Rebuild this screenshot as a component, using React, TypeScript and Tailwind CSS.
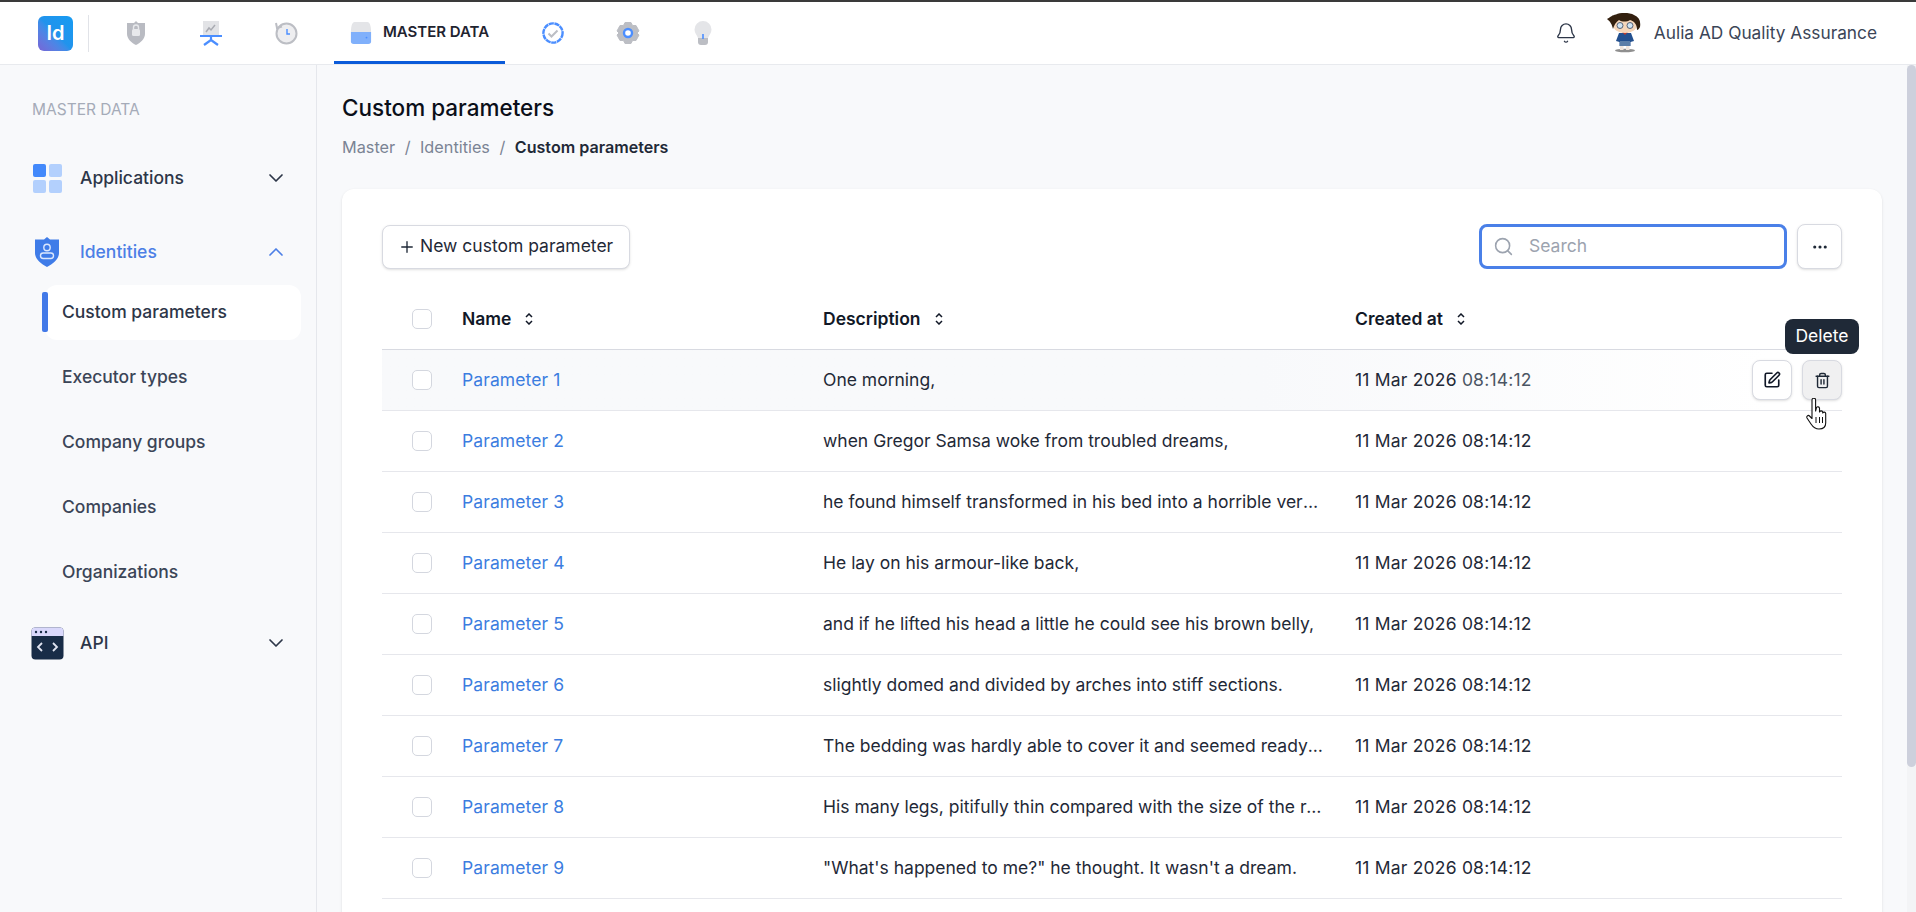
import { Bell, ChevronDown, ChevronUp, Ellipsis, Plus, Search, SquarePen, Trash2 } from "lucide-react";

const rows = [
	"One morning,",
	"when Gregor Samsa woke from troubled dreams,",
	"he found himself transformed in his bed into a horrible vermin.",
	"He lay on his armour-like back,",
	"and if he lifted his head a little he could see his brown belly,",
	"slightly domed and divided by arches into stiff sections.",
	"The bedding was hardly able to cover it and seemed ready to slide off any moment.",
	"His many legs, pitifully thin compared with the size of the rest of him,",
	"\"What's happened to me?\" he thought. It wasn't a dream.",
];

const subItems = ["Executor types", "Company groups", "Companies", "Organizations"];

function ShieldIcon() {
	return (
		<svg width="22" height="26" viewBox="0 0 22 26">
			<path d="M11 1 L13 3 H20 V14 C20 19 15 23 11 25 C7 23 2 19 2 14 V3 H9 Z" fill="#b9bbc2" />
			<rect x="7" y="9" width="8" height="7" rx="1.5" fill="#e8e9ec" />
			<path d="M8.5 9 V7.5 a2.5 2.5 0 0 1 5 0 V9" fill="none" stroke="#e8e9ec" strokeWidth="1.4" />
		</svg>
	);
}

function BoardIcon() {
	return (
		<svg width="24" height="26" viewBox="0 0 24 26">
			<rect x="4" y="1" width="16" height="14" fill="#e2e3e6" />
			<path d="M7 12 L10 8 L12 10 L16 5" fill="none" stroke="#a9abb2" strokeWidth="1.5" />
			<rect x="1" y="15" width="22" height="2" fill="#4b8eff" />
			<path d="M12 16 V21 M12 20 L5 25 M12 20 L19 25" stroke="#4b8eff" strokeWidth="2.2" fill="none" />
		</svg>
	);
}

function HistoryIcon() {
	return (
		<svg width="24" height="26" viewBox="0 0 24 26">
			<circle cx="12.5" cy="13.5" r="10" fill="#eeeef0" stroke="#bcbec4" strokeWidth="2" />
			<path d="M2 3 L3 8 L8 6.5" fill="none" stroke="#bcbec4" strokeWidth="2" />
			<path d="M13 9 V14 H16" fill="none" stroke="#4b8eff" strokeWidth="1.4" />
		</svg>
	);
}

function DriveIcon() {
	return (
		<svg width="22" height="26" viewBox="0 0 24 26">
			<path d="M5 1 H19 C21 1 23 4 23 12 H1 C1 4 3 1 5 1 Z" fill="#e4e5e8" />
			<path d="M1 12 H23 V22 a3 3 0 0 1 -3 3 H4 a3 3 0 0 1 -3 -3 Z" fill="#80b0fb" />
			<circle cx="18" cy="18" r="1" fill="#4b8eff" />
		</svg>
	);
}

function BadgeIcon() {
	return (
		<svg width="24" height="24" viewBox="0 0 24 24">
			<circle cx="12" cy="12" r="9.6" fill="#fff" stroke="#4b8eff" strokeWidth="2.4" strokeDasharray="5.2 0.6" />
			<path d="M7.5 12.5 L10.5 15.5 L16.5 9.5" fill="none" stroke="#bcbec4" strokeWidth="2" />
		</svg>
	);
}

function GearIcon() {
	return (
		<svg width="24" height="24" viewBox="0 0 24 24">
			<path
				d="M9 1.5 H15 L16.5 4.5 L20 4.5 L23 10 L21 12 L23 14 L20 19.5 L16.5 19.5 L15 22.5 H9 L7.5 19.5 L4 19.5 L1 14 L3 12 L1 10 L4 4.5 L7.5 4.5 Z"
				fill="#bcbec4"
				stroke="#bcbec4"
				strokeLinejoin="round"
			/>
			<circle cx="12" cy="12" r="4" fill="#fff" stroke="#4b8eff" strokeWidth="2.4" />
		</svg>
	);
}

function BulbIcon() {
	return (
		<svg width="20" height="26" viewBox="0 0 20 26">
			<path d="M10 1 a8.5 8.5 0 0 1 8.5 8.5 C18.5 13 16 15 15 18 H5 C4 15 1.5 13 1.5 9.5 A8.5 8.5 0 0 1 10 1 Z" fill="#e4e5e8" />
			<path d="M5 18 H15 V22 a3 3 0 0 1 -3 3 H8 a3 3 0 0 1 -3 -3 Z" fill="#bcbec4" />
			<rect x="9.2" y="14" width="1.6" height="5" fill="#4b8eff" />
		</svg>
	);
}

function Avatar() {
	return (
		<svg width="36" height="40" viewBox="0 0 36 40">
			<ellipse cx="19" cy="37.500" rx="10" ry="1.800" fill="#8f8f8f" />
			<rect x="14" y="31" width="3.500" height="6" fill="#f2e6dc" />
			<rect x="20" y="31" width="3.500" height="6" fill="#f2e6dc" />
			<path d="M13 20 H25 L28 28 L24.500 29 V33 H13.500 V29 L10 28 Z" fill="#23508f" />
			<path d="M14 28 H24 V33 H14 Z" fill="#5d7fa8" />
			<path d="M16 19 H22 L19 22 Z" fill="#c0392b" />
			<ellipse cx="19" cy="12" rx="12" ry="8" fill="#f5d6ba" />
			<path d="M1 6 C5 4 6 2 10 1.500 C14 -.5 24 -.5 28 2 C33 4 35 8 34 14 C33 16 32 17 31 17 C31 11 28 8 24 7 C21 9 16 9 13 7 C10 9 8 12 7 16 C6 12 5 9 1 6 Z" fill="#33200f" />
			<circle cx="14" cy="12.500" r="3" fill="#cfe3f2" stroke="#33415c" strokeWidth="0.800" />
			<circle cx="24" cy="12.500" r="3" fill="#cfe3f2" stroke="#33415c" strokeWidth="0.800" />
		</svg>
	);
}

function SortIcon() {
	return (
		<svg width="8" height="12" viewBox="0 0 8 12" className="ml-3.5 text-[#111827]">
			<path d="M1 4 L4 1 L7 4 M1 8 L4 11 L7 8" fill="none" stroke="currentColor" strokeWidth="1.5" />
		</svg>
	);
}

function HandCursor() {
	return (
		<svg width="24" height="32" viewBox="0 0 24 32" className="absolute left-[1806px] top-[398px]">
			<path
				d="M6 2 a1.8 1.8 0 0 1 3.6 0 V13 L10.5 9.5 a1.7 1.7 0 0 1 3 .6 V14 a1.7 1.7 0 0 1 3.2 0 V15 a1.6 1.6 0 0 1 3 .4 V25 C19.7 29 17 31 13 31 C9 31 7 29 5 26 L1 20 C.2 18.500 2 16.500 3.500 18 L6 20.500 Z"
				fill="#fff"
				stroke="#111"
				strokeWidth="1.1"
				strokeLinejoin="round"
			/>
			<path d="M10 19 V25 M13.500 19 V25 M16.500 19 V25" stroke="#111" strokeWidth="1" />
		</svg>
	);
}

function SideHead({ label, icon, open }: { label: string; icon: React.ReactNode; open?: boolean }) {
	return (
		<div className="flex h-[30px] items-center pl-[32px] pr-[28px]">
			<div className="flex w-[48px] shrink-0 items-center">{icon}</div>
			<span className={`flex-1 text-[17.5px] font-[450] ${open ? "text-[#4c7fe6]" : "text-[#2d3648]"}`}>{label}</span>
			{open ? (
				<ChevronUp size={24} strokeWidth={1.7} className="text-[#4c7fe6]" />
			) : (
				<ChevronDown size={24} strokeWidth={1.7} className="text-[#2d3648]" />
			)}
		</div>
	);
}

function Sidebar() {
	return (
		<aside className="flex w-[317px] shrink-0 flex-col border-r border-[#e5e7ec] bg-[#f8f9fb]">
			<div className="mt-[35px] pl-[32px] text-[15.5px] leading-5 text-[#a5abb8]">MASTER DATA</div>
			<div className="mt-[43px]">
				<SideHead
					label="Applications"
					icon={
						<div className="ml-px grid w-[29px] grid-cols-2 gap-[3px]">
							<div className="h-[13px] rounded-[2px] bg-[#4389fb]" />
							<div className="h-[13px] rounded-[2px] bg-[#b3d0fd]" />
							<div className="h-[13px] rounded-[2px] bg-[#b3d0fd]" />
							<div className="h-[13px] rounded-[2px] bg-[#b3d0fd]" />
						</div>
					}
				/>
			</div>
			<div className="mt-[44px]">
				<SideHead
					label="Identities"
					open
					icon={
						<svg width="30" height="30" viewBox="0 0 30 30">
							<path d="M15 0 L18 2.500 H27 V16 C27 22 21 27 15 30 C9 27 3 22 3 16 V2.500 H12 Z" fill="#3f7ce8" />
							<circle cx="15" cy="10.500" r="3.200" fill="none" stroke="#dbe7fd" strokeWidth="1.400" />
							<rect x="8.500" y="16" width="13" height="5.500" rx="2.700" fill="none" stroke="#dbe7fd" strokeWidth="1.400" />
						</svg>
					}
				/>
			</div>
			<div className="relative ml-[45px] mr-[15px] mt-[18px] flex h-[55px] items-center rounded-xl bg-white pl-[17px] text-[17.5px] font-[450] text-[#2d3648]">
				<div className="absolute left-[-3px] top-[7px] h-[40px] w-[6px] rounded-[2px] bg-[#4279e8]" />
				Custom parameters
			</div>
			<div className="mt-[5px]">
				{subItems.map((item) => (
					<div key={item} className="flex h-[65px] items-center pl-[62px] text-[17.5px] font-[450] text-[#3b4557]">
						{item}
					</div>
				))}
			</div>
			<div className="mt-[23px]">
				<SideHead
					label="API"
					icon={
						<svg width="33" height="33" viewBox="0 0 33 33" className="-ml-px">
							<rect x="0.500" y="0.500" width="32" height="32" rx="4" fill="#182c47" />
							<path d="M.5 9 V4.500 a4 4 0 0 1 4 -4 H28.500 a4 4 0 0 1 4 4 V9 Z" fill="#d9d8fb" />
							<circle cx="5" cy="5" r="1.200" fill="#182c47" />
							<circle cx="10" cy="5" r="1.200" fill="#182c47" />
							<circle cx="15" cy="5" r="1.200" fill="#182c47" />
							<path d="M11 16 L7 20 L11 24 M22 16 L26 20 L22 24" fill="none" stroke="#dfe3f0" strokeWidth="1.800" />
						</svg>
					}
				/>
			</div>
		</aside>
	);
}

function Checkbox() {
	return <div className="h-5 w-5 rounded-[5px] border border-[#d4d7df] bg-white" />;
}

function ParamRow({ text, idx }: { text: string; idx: number }) {
	const hover = idx === 0;
	return (
		<div
			className={`grid h-[61px] grid-cols-[80px_361px_532px_1fr_auto] items-center border-b border-[#e6e7ec] text-[17.5px] text-[#1f2937] ${
				hover ? "bg-gradient-to-r from-[#f8f9fb] from-60% to-white to-95%" : ""
			}`}
		>
			<div className="pl-[30px]">
				<Checkbox />
			</div>
			<a className="tracking-[0.1px] text-[#3c7de0]">Parameter {idx + 1}</a>
			<div className="w-[500px] truncate">{text}</div>
			<div className="tracking-[0.2px]">
				11 Mar 2026 <span className={hover ? "text-[#4b5563]" : ""}>08:14:12</span>
			</div>
			{hover && (
				<div className="flex gap-2.5">
					<button className="flex h-10 w-10 items-center justify-center rounded-lg border border-[#d8dae1] bg-white text-[#111827] shadow-sm">
						<SquarePen size={18} strokeWidth={2.2} />
					</button>
					<button className="flex h-10 w-10 items-center justify-center rounded-lg border border-[#d8dae1] bg-[#f0f0f1] text-[#1f2937] shadow-sm">
						<Trash2 size={17} />
					</button>
				</div>
			)}
		</div>
	);
}

export default function App() {
	return (
		<div className="relative flex h-[912px] w-[1916px] flex-col overflow-hidden bg-white font-['Inter',sans-serif]">
			<div className="h-[2px] shrink-0 bg-[#3a3a3a]" />
			<header className="flex h-[63px] shrink-0 items-center border-b border-[#e8eaee] bg-white">
				<div className="ml-[38px] flex h-[35px] w-[35px] items-center justify-center rounded-md bg-gradient-to-tr from-[#7565d6] via-[#2193ec] to-[#159bf2] text-xl font-semibold text-white">
					Id
				</div>
				<div className="ml-[15px] h-[37px] w-px bg-[#e1e3e8]" />
				<nav className="ml-[9px] flex h-full items-center">
					<div className="flex w-[75px] justify-center"><ShieldIcon /></div>
					<div className="flex w-[75px] justify-center"><BoardIcon /></div>
					<div className="flex w-[75px] justify-center"><HistoryIcon /></div>
					<div className="ml-[11px] flex h-full w-[171px] items-center justify-center gap-[11px] border-b-[3px] border-[#0b5bd9] pt-[2px]">
						<DriveIcon />
						<span className="text-[15px] font-semibold text-[#1f2430]">MASTER DATA</span>
					</div>
					<div className="ml-[10px] flex w-[75px] justify-center"><BadgeIcon /></div>
					<div className="flex w-[75px] justify-center"><GearIcon /></div>
					<div className="flex w-[75px] justify-center"><BulbIcon /></div>
				</nav>
				<div className="ml-auto flex items-center pr-[39px]">
					<Bell size={22} strokeWidth={1.5} className="text-[#2d3648]" />
					<div className="ml-[29px]"><Avatar /></div>
					<span className="ml-[12px] text-[17.3px] text-[#3b4557]">Aulia AD Quality Assurance</span>
				</div>
			</header>
			<div className="flex min-h-0 flex-1">
				<Sidebar />
				<main className="min-w-0 flex-1 overflow-hidden bg-[#f8f9fb] pl-[25px] pr-[25px]">
					<h1 className="mt-[29px] text-[22.5px] font-medium leading-7 text-[#0b0f19]">Custom parameters</h1>
					<div className="mt-[15px] flex items-center text-[16.25px] leading-5 text-[#7b8494]">
						<span>Master</span>
						<span className="mx-[9.5px]">/</span>
						<span>Identities</span>
						<span className="mx-[9.5px]">/</span>
						<span className="text-[16.1px] font-semibold text-[#1f2937]">Custom parameters</span>
					</div>
					<section className="mt-[32px] rounded-t-xl bg-white px-[40px] pb-[100px] pt-[35px] shadow-sm">
						<div className="flex items-center justify-between">
							<button className="flex h-[44px] items-center gap-[4px] rounded-lg border border-[#d8dae1] bg-white pl-[15px] pr-[16px] text-[17.5px] text-[#1f2937] shadow-sm">
								<Plus size={18} strokeWidth={1.8} />
								New custom parameter
							</button>
							<div className="flex items-center gap-[10px]">
								<div className="flex h-[45px] w-[308px] items-center gap-[15px] rounded-lg border-[3px] border-[#4a80e8] pl-[11px]">
									<Search size={21} strokeWidth={1.8} className="shrink-0 text-[#9ca3af]" />
									<input placeholder="Search" className="w-full bg-transparent text-[17.5px] outline-none placeholder:text-[#9ca3af]" />
								</div>
								<button className="flex h-[45px] w-[45px] items-center justify-center rounded-lg border border-[#d8dae1] bg-white text-[#1f2937] shadow-sm">
									<Ellipsis size={18} strokeWidth={2.2} />
								</button>
							</div>
						</div>
						<div className="mt-[20px] grid h-[61px] grid-cols-[80px_361px_532px_1fr] items-center border-b border-[#d8dae1] text-[17.5px] font-semibold text-[#111827]">
							<div className="pl-[30px]">
								<Checkbox />
							</div>
							<div className="flex items-center">Name<SortIcon /></div>
							<div className="flex items-center">Description<SortIcon /></div>
							<div className="flex items-center">Created at<SortIcon /></div>
						</div>
						{rows.map((text, idx) => (
							<ParamRow key={idx} text={text} idx={idx} />
						))}
					</section>
				</main>
				<div className="w-[9px] shrink-0 bg-[#f3f4f6]">
					<div className="h-[702px] rounded-b-md rounded-t-md bg-[#cdd0dc]" />
				</div>
			</div>
			<div className="absolute left-[1785px] top-[319px] flex h-[35px] w-[74px] items-center justify-center rounded-lg bg-[#1f2937] text-[17.5px] text-white">
				Delete
			</div>
			<HandCursor />
		</div>
	);
}
